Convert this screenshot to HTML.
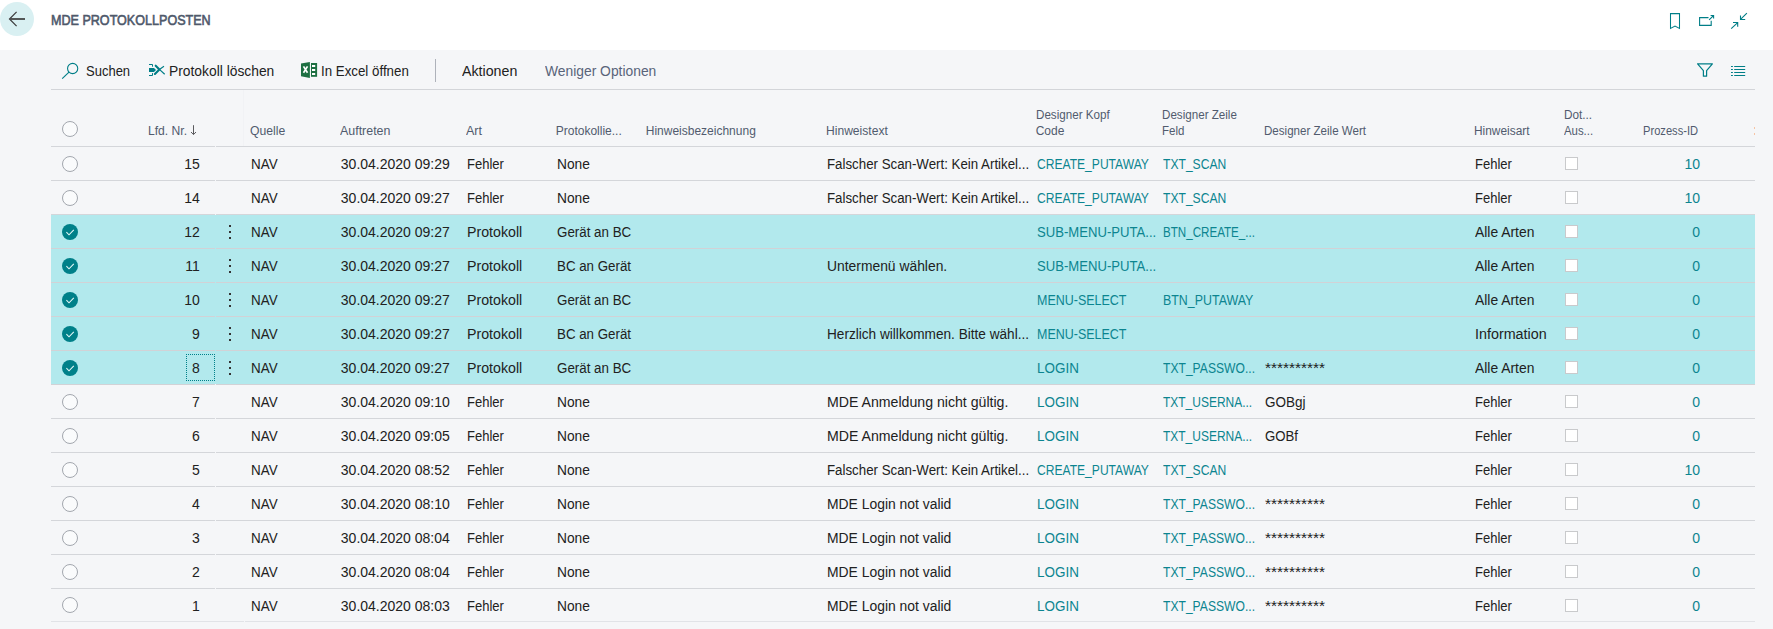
<!DOCTYPE html>
<html lang="de"><head><meta charset="utf-8"><title>MDE Protokollposten</title>
<style>
html,body{margin:0;padding:0}
body{width:1773px;height:629px;overflow:hidden;background:#fff;position:relative;font-family:"Liberation Sans",sans-serif}
.bg{position:absolute;left:0;top:50px;width:1773px;height:579px;background:#f5f6f8}
.t{position:absolute;white-space:pre;transform-origin:0 0}
.sel{position:absolute;left:51px;width:1704px;height:34px;background:#b2e9ed}
.ln{position:absolute;left:51px;width:1704px;height:1px}
.gap{position:absolute;left:215px;width:1px;height:1px}
.rc{position:absolute;left:62px;width:14px;height:14px;border:1px solid #a3a7ae;border-radius:50%;background:#fafbfc}
.ck{position:absolute;left:62px}
.cb{position:absolute;left:1565px;width:11px;height:11px;border:1px solid #c9cacc;background:#fff}
.dots{position:absolute;left:229px;width:2px}
.dots i{display:block;width:2px;height:2px;background:#333;margin-bottom:4px}
.abs{position:absolute}
</style></head><body>
<div class="bg"></div>
<svg class="abs" style="left:0;top:2px" width="34" height="34" viewBox="0 0 34 34"><circle cx="17" cy="17" r="17" fill="#d9f0f2"/><path d="M25 17 H10.5" fill="none" stroke="#3b3b3b" stroke-width="1.7"/><path d="M16.6 9.9 L9.5 17 L16.6 24.1" fill="none" stroke="#3b3b3b" stroke-width="1.2"/></svg>
<svg class="abs" style="left:60px;top:61px" width="20" height="20" viewBox="0 0 20 20"><circle cx="12.65" cy="7.5" r="5.1" fill="none" stroke="#007e87" stroke-width="1.1"/><path d="M9.0 11.2 L2.2 17.7" stroke="#007e87" stroke-width="1.15" fill="none"/></svg>
<svg class="abs" style="left:147px;top:61px" width="20" height="20" viewBox="0 0 20 20"><path d="M2 3.5 H5.5 V5.7 M5.5 12.1 V14.5 H2" stroke="#007e87" stroke-width="1" fill="none"/><path d="M2 7.1 H7 L9 9 L7 10.9 H2 Z" fill="#007e87"/><path d="M8.7 4.7 L12.4 8.4 M7.9 12.9 L12.4 8.4" stroke="#007e87" stroke-width="2.1" stroke-linecap="round" fill="none"/><path d="M12.4 8.4 L17.7 13.2 M12.4 8.4 L17 5.3" stroke="#007e87" stroke-width="1.2" fill="none"/></svg>
<svg class="abs" style="left:300px;top:61px" width="18" height="18" viewBox="0 0 18 18"><path d="M1 2.6 L9.9 0.9 V16.9 L1 15.2 Z" fill="#1d6f42"/><rect x="11" y="2" width="6.1" height="13.8" fill="#1d6f42"/><path d="M12 4.95 h3.2 M12 9.05 h3.2 M12 13.05 h3.2" stroke="#fff" stroke-width="1.9"/><path d="M3.5 5.4 L7.5 11.8 M7.5 5.4 L3.5 11.8" stroke="#fff" stroke-width="1.7"/></svg>
<svg class="abs" style="left:1668px;top:12px" width="14" height="18" viewBox="0 0 14 18"><path d="M2.5 1.6 H11.5 V16.4 L7 14 L2.5 16.4 Z" fill="none" stroke="#007e87" stroke-width="1.05"/></svg>
<svg class="abs" style="left:1697px;top:12px" width="19" height="16" viewBox="0 0 19 16"><path d="M11.5 5.6 H2.6 V13.4 H14.2 V8.8" fill="none" stroke="#007e87" stroke-width="1.1"/><path d="M12.1 7.8 L16.6 3.5 M13.6 3.5 H16.6 V6.5" fill="none" stroke="#007e87" stroke-width="1.1"/></svg>
<svg class="abs" style="left:1730px;top:12px" width="18" height="18" viewBox="0 0 18 18"><path d="M16.9 1.2 L10.5 7.4 M10.5 3.4 V7.5 H15.2 M1.2 16.7 L7.7 10.6 M3 10.5 H7.7 V14.7" fill="none" stroke="#007e87" stroke-width="1.1"/></svg>
<svg class="abs" style="left:1696px;top:62px" width="18" height="16" viewBox="0 0 18 16"><path d="M1.6 1.8 H16.4 L10.6 8.6 V14.2 H7.4 V8.6 Z" fill="none" stroke="#007e87" stroke-width="1.2" stroke-linejoin="round"/></svg>
<svg class="abs" style="left:1730px;top:65px" width="17" height="12" viewBox="0 0 17 12"><path d="M4.2 1.5 H15.2 M4.2 4.5 H15.2 M4.2 7.5 H15.2 M4.2 10.5 H15.2" stroke="#007e87" stroke-width="1"/><path d="M1 1.5 H2.9 M1 4.5 H2.9 M1 7.5 H2.9 M1 10.5 H2.9" stroke="#007e87" stroke-width="1"/></svg>
<svg class="abs" style="left:189px;top:124px" width="9" height="12" viewBox="0 0 9 12"><path d="M4.5 1.2 V10.4 M2 8 L4.5 10.6 L7 8" fill="none" stroke="#5a5a5e" stroke-width="1"/></svg>

<div class="abs" style="left:51px;top:89px;width:1704px;height:1px;background:#d3d5d9"></div>
<div class="abs" style="left:435px;top:59px;width:1px;height:23px;background:#aeb2ba"></div>
<div class="rc" style="top:121px"></div>
<div class="abs" style="left:243px;top:90px;width:1px;height:56px;background:#f1f2f5"></div>
<div class="abs" style="left:1754px;top:127px;width:1px;height:2px;background:#f7c4a4"></div>
<div class="abs" style="left:1754px;top:133px;width:1px;height:2px;background:#f7c4a4"></div>
<div class="rc" style="top:156px"></div>
<div class="cb" style="top:157px"></div>
<div class="rc" style="top:190px"></div>
<div class="cb" style="top:191px"></div>
<div class="sel" style="top:215px"></div>
<svg class="ck" style="top:224px" width="16" height="16" viewBox="0 0 16 16"><circle cx="8" cy="8" r="8" fill="#008089"/><path d="M4.4 8.2 L7 10.8 L11.8 5.8" fill="none" stroke="#e6f8f9" stroke-width="1.05"/></svg>
<div class="dots" style="top:225.25px"><i></i><i></i><i></i></div>
<div class="cb" style="top:225px"></div>
<div class="sel" style="top:249px"></div>
<svg class="ck" style="top:258px" width="16" height="16" viewBox="0 0 16 16"><circle cx="8" cy="8" r="8" fill="#008089"/><path d="M4.4 8.2 L7 10.8 L11.8 5.8" fill="none" stroke="#e6f8f9" stroke-width="1.05"/></svg>
<div class="dots" style="top:259.25px"><i></i><i></i><i></i></div>
<div class="cb" style="top:259px"></div>
<div class="sel" style="top:283px"></div>
<svg class="ck" style="top:292px" width="16" height="16" viewBox="0 0 16 16"><circle cx="8" cy="8" r="8" fill="#008089"/><path d="M4.4 8.2 L7 10.8 L11.8 5.8" fill="none" stroke="#e6f8f9" stroke-width="1.05"/></svg>
<div class="dots" style="top:293.25px"><i></i><i></i><i></i></div>
<div class="cb" style="top:293px"></div>
<div class="sel" style="top:317px"></div>
<svg class="ck" style="top:326px" width="16" height="16" viewBox="0 0 16 16"><circle cx="8" cy="8" r="8" fill="#008089"/><path d="M4.4 8.2 L7 10.8 L11.8 5.8" fill="none" stroke="#e6f8f9" stroke-width="1.05"/></svg>
<div class="dots" style="top:327.25px"><i></i><i></i><i></i></div>
<div class="cb" style="top:327px"></div>
<div class="sel" style="top:351px"></div>
<svg class="ck" style="top:360px" width="16" height="16" viewBox="0 0 16 16"><circle cx="8" cy="8" r="8" fill="#008089"/><path d="M4.4 8.2 L7 10.8 L11.8 5.8" fill="none" stroke="#e6f8f9" stroke-width="1.05"/></svg>
<div class="dots" style="top:361.25px"><i></i><i></i><i></i></div>
<div class="cb" style="top:361px"></div>
<div class="rc" style="top:394px"></div>
<div class="cb" style="top:395px"></div>
<div class="rc" style="top:428px"></div>
<div class="cb" style="top:429px"></div>
<div class="rc" style="top:462px"></div>
<div class="cb" style="top:463px"></div>
<div class="rc" style="top:496px"></div>
<div class="cb" style="top:497px"></div>
<div class="rc" style="top:530px"></div>
<div class="cb" style="top:531px"></div>
<div class="rc" style="top:564px"></div>
<div class="cb" style="top:565px"></div>
<div class="rc" style="top:597px"></div>
<div class="cb" style="top:599px"></div>
<div class="ln" style="top:146px;background:#d4d6da"></div>
<div class="gap" style="top:146px;background:#f5f6f8"></div>
<div class="ln" style="top:180px;background:#d4d6da"></div>
<div class="gap" style="top:180px;background:#f5f6f8"></div>
<div class="ln" style="top:214px;background:#d4d6da"></div>
<div class="gap" style="top:214px;background:#f5f6f8"></div>
<div class="ln" style="top:248px;background:#d2d2d6"></div>
<div class="gap" style="top:248px;background:#b2e9ed"></div>
<div class="ln" style="top:282px;background:#d2d2d6"></div>
<div class="gap" style="top:282px;background:#b2e9ed"></div>
<div class="ln" style="top:316px;background:#d2d2d6"></div>
<div class="gap" style="top:316px;background:#b2e9ed"></div>
<div class="ln" style="top:350px;background:#d2d2d6"></div>
<div class="gap" style="top:350px;background:#b2e9ed"></div>
<div class="ln" style="top:384px;background:#d2d2d6"></div>
<div class="gap" style="top:384px;background:#f5f6f8"></div>
<div class="ln" style="top:418px;background:#d4d6da"></div>
<div class="gap" style="top:418px;background:#f5f6f8"></div>
<div class="ln" style="top:452px;background:#d4d6da"></div>
<div class="gap" style="top:452px;background:#f5f6f8"></div>
<div class="ln" style="top:486px;background:#d4d6da"></div>
<div class="gap" style="top:486px;background:#f5f6f8"></div>
<div class="ln" style="top:520px;background:#d4d6da"></div>
<div class="gap" style="top:520px;background:#f5f6f8"></div>
<div class="ln" style="top:554px;background:#d4d6da"></div>
<div class="gap" style="top:554px;background:#f5f6f8"></div>
<div class="ln" style="top:588px;background:#d4d6da"></div>
<div class="gap" style="top:588px;background:#f5f6f8"></div>
<div class="ln" style="top:621px;background:#e1e3e7"></div>
<div class="gap" style="top:621px;left:244px;background:#f5f6f8"></div>
<div class="abs" style="left:186px;top:354px;width:27px;height:25px;border:1px dotted #008089"></div>
<span class="t" style="left:50.61px;top:3px;font-size:14px;line-height:34px;color:#4f596b;-webkit-text-stroke:0.6px #4f596b;transform:scaleX(0.8976)">MDE PROTOKOLLPOSTEN</span>
<span class="t" style="left:85.79px;top:54px;font-size:14px;line-height:34px;color:#212121;transform:scaleX(0.9285)">Suchen</span>
<span class="t" style="left:168.84px;top:54px;font-size:14px;line-height:34px;color:#212121;transform:scaleX(0.9875)">Protokoll löschen</span>
<span class="t" style="left:321.17px;top:54px;font-size:14px;line-height:34px;color:#212121;transform:scaleX(0.9504)">In Excel öffnen</span>
<span class="t" style="left:461.52px;top:54px;font-size:14px;line-height:34px;color:#212121;transform:scaleX(1.0148)">Aktionen</span>
<span class="t" style="left:544.64px;top:54px;font-size:14px;line-height:34px;color:#59647a;transform:scaleX(0.9884)">Weniger Optionen</span>
<span class="t" style="left:147.63px;top:123px;font-size:12px;line-height:16px;color:#515b6e;transform:scaleX(1.0112)">Lfd. Nr.</span>
<span class="t" style="left:249.53px;top:123px;font-size:12px;line-height:16px;color:#515b6e;transform:scaleX(1.0154)">Quelle</span>
<span class="t" style="left:339.52px;top:123px;font-size:12px;line-height:16px;color:#515b6e;transform:scaleX(1.0353)">Auftreten</span>
<span class="t" style="left:466.31px;top:123px;font-size:12px;line-height:16px;color:#515b6e;transform:scaleX(1.0441)">Art</span>
<span class="t" style="left:555.74px;top:123px;font-size:12px;line-height:16px;color:#515b6e">Protokollie...</span>
<span class="t" style="left:645.74px;top:123px;font-size:12px;line-height:16px;color:#515b6e">Hinweisbezeichnung</span>
<span class="t" style="left:825.84px;top:123px;font-size:12px;line-height:16px;color:#515b6e;transform:scaleX(1.0075)">Hinweistext</span>
<span class="t" style="left:1035.66px;top:107px;font-size:12px;line-height:16px;color:#515b6e;transform:scaleX(0.9694)">Designer Kopf</span>
<span class="t" style="left:1035.64px;top:123px;font-size:12px;line-height:16px;color:#515b6e">Code</span>
<span class="t" style="left:1161.76px;top:107px;font-size:12px;line-height:16px;color:#515b6e;transform:scaleX(0.9683)">Designer Zeile</span>
<span class="t" style="left:1161.77px;top:123px;font-size:12px;line-height:16px;color:#515b6e;transform:scaleX(0.9604)">Feld</span>
<span class="t" style="left:1263.96px;top:123px;font-size:12px;line-height:16px;color:#515b6e;transform:scaleX(0.9640)">Designer Zeile Wert</span>
<span class="t" style="left:1473.75px;top:123px;font-size:12px;line-height:16px;color:#515b6e;transform:scaleX(0.9912)">Hinweisart</span>
<span class="t" style="left:1563.75px;top:107px;font-size:12px;line-height:16px;color:#515b6e;transform:scaleX(0.9802)">Dot...</span>
<span class="t" style="left:1563.77px;top:123px;font-size:12px;line-height:16px;color:#515b6e;transform:scaleX(0.9489)">Aus...</span>
<span class="t" style="left:1642.99px;top:123px;font-size:12px;line-height:16px;color:#515b6e;transform:scaleX(0.9288)">Prozess-ID</span>
<span class="t" style="right:1573.30px;top:147px;font-size:14px;line-height:34px;color:#212121">15</span>
<span class="t" style="left:250.76px;top:147px;font-size:14px;line-height:34px;color:#212121;transform:scaleX(0.9582)">NAV</span>
<span class="t" style="left:340.83px;top:147px;font-size:14px;line-height:34px;color:#212121">30.04.2020 09:29</span>
<span class="t" style="left:466.78px;top:147px;font-size:14px;line-height:34px;color:#212121;transform:scaleX(0.9295)">Fehler</span>
<span class="t" style="left:556.54px;top:147px;font-size:14px;line-height:34px;color:#212121;transform:scaleX(0.9827)">None</span>
<span class="t" style="left:826.87px;top:147px;font-size:14px;line-height:34px;color:#212121;transform:scaleX(0.9491)">Falscher Scan-Wert: Kein Artikel...</span>
<span class="t" style="left:1036.74px;top:147px;font-size:14px;line-height:34px;color:#0c8590;transform:scaleX(0.8630)">CREATE_PUTAWAY</span>
<span class="t" style="left:1162.73px;top:147px;font-size:14px;line-height:34px;color:#0c8590;transform:scaleX(0.8655)">TXT_SCAN</span>
<span class="t" style="left:1474.88px;top:147px;font-size:14px;line-height:34px;color:#212121;transform:scaleX(0.9295)">Fehler</span>
<span class="t" style="right:73.00px;top:147px;font-size:14px;line-height:34px;color:#0c8590">10</span>
<span class="t" style="right:1573.30px;top:181px;font-size:14px;line-height:34px;color:#212121">14</span>
<span class="t" style="left:250.76px;top:181px;font-size:14px;line-height:34px;color:#212121;transform:scaleX(0.9582)">NAV</span>
<span class="t" style="left:340.83px;top:181px;font-size:14px;line-height:34px;color:#212121">30.04.2020 09:27</span>
<span class="t" style="left:466.78px;top:181px;font-size:14px;line-height:34px;color:#212121;transform:scaleX(0.9295)">Fehler</span>
<span class="t" style="left:556.54px;top:181px;font-size:14px;line-height:34px;color:#212121;transform:scaleX(0.9827)">None</span>
<span class="t" style="left:826.87px;top:181px;font-size:14px;line-height:34px;color:#212121;transform:scaleX(0.9491)">Falscher Scan-Wert: Kein Artikel...</span>
<span class="t" style="left:1036.74px;top:181px;font-size:14px;line-height:34px;color:#0c8590;transform:scaleX(0.8630)">CREATE_PUTAWAY</span>
<span class="t" style="left:1162.73px;top:181px;font-size:14px;line-height:34px;color:#0c8590;transform:scaleX(0.8655)">TXT_SCAN</span>
<span class="t" style="left:1474.88px;top:181px;font-size:14px;line-height:34px;color:#212121;transform:scaleX(0.9295)">Fehler</span>
<span class="t" style="right:73.00px;top:181px;font-size:14px;line-height:34px;color:#0c8590">10</span>
<span class="t" style="right:1573.30px;top:215px;font-size:14px;line-height:34px;color:#212121">12</span>
<span class="t" style="left:250.76px;top:215px;font-size:14px;line-height:34px;color:#212121;transform:scaleX(0.9582)">NAV</span>
<span class="t" style="left:340.83px;top:215px;font-size:14px;line-height:34px;color:#212121">30.04.2020 09:27</span>
<span class="t" style="left:466.72px;top:215px;font-size:14px;line-height:34px;color:#212121;transform:scaleX(1.0132)">Protokoll</span>
<span class="t" style="left:556.57px;top:215px;font-size:14px;line-height:34px;color:#212121;transform:scaleX(0.9533)">Gerät an BC</span>
<span class="t" style="left:1036.68px;top:215px;font-size:14px;line-height:34px;color:#0c8590;transform:scaleX(0.9362)">SUB-MENU-PUTA...</span>
<span class="t" style="left:1162.76px;top:215px;font-size:14px;line-height:34px;color:#0c8590;transform:scaleX(0.8287)">BTN_CREATE_...</span>
<span class="t" style="left:1475.44px;top:215px;font-size:14px;line-height:34px;color:#212121;transform:scaleX(0.9909)">Alle Arten</span>
<span class="t" style="right:73.00px;top:215px;font-size:14px;line-height:34px;color:#0c8590">0</span>
<span class="t" style="right:1573.30px;top:249px;font-size:14px;line-height:34px;color:#212121">11</span>
<span class="t" style="left:250.76px;top:249px;font-size:14px;line-height:34px;color:#212121;transform:scaleX(0.9582)">NAV</span>
<span class="t" style="left:340.83px;top:249px;font-size:14px;line-height:34px;color:#212121">30.04.2020 09:27</span>
<span class="t" style="left:466.72px;top:249px;font-size:14px;line-height:34px;color:#212121;transform:scaleX(1.0132)">Protokoll</span>
<span class="t" style="left:556.57px;top:249px;font-size:14px;line-height:34px;color:#212121;transform:scaleX(0.9507)">BC an Gerät</span>
<span class="t" style="left:826.84px;top:249px;font-size:14px;line-height:34px;color:#212121;transform:scaleX(0.9900)">Untermenü wählen.</span>
<span class="t" style="left:1036.68px;top:249px;font-size:14px;line-height:34px;color:#0c8590;transform:scaleX(0.9362)">SUB-MENU-PUTA...</span>
<span class="t" style="left:1475.44px;top:249px;font-size:14px;line-height:34px;color:#212121;transform:scaleX(0.9909)">Alle Arten</span>
<span class="t" style="right:73.00px;top:249px;font-size:14px;line-height:34px;color:#0c8590">0</span>
<span class="t" style="right:1573.30px;top:283px;font-size:14px;line-height:34px;color:#212121">10</span>
<span class="t" style="left:250.76px;top:283px;font-size:14px;line-height:34px;color:#212121;transform:scaleX(0.9582)">NAV</span>
<span class="t" style="left:340.83px;top:283px;font-size:14px;line-height:34px;color:#212121">30.04.2020 09:27</span>
<span class="t" style="left:466.72px;top:283px;font-size:14px;line-height:34px;color:#212121;transform:scaleX(1.0132)">Protokoll</span>
<span class="t" style="left:556.57px;top:283px;font-size:14px;line-height:34px;color:#212121;transform:scaleX(0.9533)">Gerät an BC</span>
<span class="t" style="left:1036.71px;top:283px;font-size:14px;line-height:34px;color:#0c8590;transform:scaleX(0.8917)">MENU-SELECT</span>
<span class="t" style="left:1162.72px;top:283px;font-size:14px;line-height:34px;color:#0c8590;transform:scaleX(0.8870)">BTN_PUTAWAY</span>
<span class="t" style="left:1475.44px;top:283px;font-size:14px;line-height:34px;color:#212121;transform:scaleX(0.9909)">Alle Arten</span>
<span class="t" style="right:73.00px;top:283px;font-size:14px;line-height:34px;color:#0c8590">0</span>
<span class="t" style="right:1573.30px;top:317px;font-size:14px;line-height:34px;color:#212121">9</span>
<span class="t" style="left:250.76px;top:317px;font-size:14px;line-height:34px;color:#212121;transform:scaleX(0.9582)">NAV</span>
<span class="t" style="left:340.83px;top:317px;font-size:14px;line-height:34px;color:#212121">30.04.2020 09:27</span>
<span class="t" style="left:466.72px;top:317px;font-size:14px;line-height:34px;color:#212121;transform:scaleX(1.0132)">Protokoll</span>
<span class="t" style="left:556.57px;top:317px;font-size:14px;line-height:34px;color:#212121;transform:scaleX(0.9507)">BC an Gerät</span>
<span class="t" style="left:826.85px;top:317px;font-size:14px;line-height:34px;color:#212121;transform:scaleX(0.9728)">Herzlich willkommen. Bitte wähl...</span>
<span class="t" style="left:1036.71px;top:317px;font-size:14px;line-height:34px;color:#0c8590;transform:scaleX(0.8917)">MENU-SELECT</span>
<span class="t" style="left:1474.81px;top:317px;font-size:14px;line-height:34px;color:#212121;transform:scaleX(1.0235)">Information</span>
<span class="t" style="right:73.00px;top:317px;font-size:14px;line-height:34px;color:#0c8590">0</span>
<span class="t" style="right:1573.30px;top:351px;font-size:14px;line-height:34px;color:#212121">8</span>
<span class="t" style="left:250.76px;top:351px;font-size:14px;line-height:34px;color:#212121;transform:scaleX(0.9582)">NAV</span>
<span class="t" style="left:340.83px;top:351px;font-size:14px;line-height:34px;color:#212121">30.04.2020 09:27</span>
<span class="t" style="left:466.72px;top:351px;font-size:14px;line-height:34px;color:#212121;transform:scaleX(1.0132)">Protokoll</span>
<span class="t" style="left:556.57px;top:351px;font-size:14px;line-height:34px;color:#212121;transform:scaleX(0.9533)">Gerät an BC</span>
<span class="t" style="left:1036.66px;top:351px;font-size:14px;line-height:34px;color:#0c8590;transform:scaleX(0.9613)">LOGIN</span>
<span class="t" style="left:1162.73px;top:351px;font-size:14px;line-height:34px;color:#0c8590;transform:scaleX(0.8653)">TXT_PASSWO...</span>
<span class="t" style="left:1264.55px;top:351px;font-size:14px;line-height:34px;color:#212121;transform:scaleX(1.1029)">**********</span>
<span class="t" style="left:1475.44px;top:351px;font-size:14px;line-height:34px;color:#212121;transform:scaleX(0.9909)">Alle Arten</span>
<span class="t" style="right:73.00px;top:351px;font-size:14px;line-height:34px;color:#0c8590">0</span>
<span class="t" style="right:1573.30px;top:385px;font-size:14px;line-height:34px;color:#212121">7</span>
<span class="t" style="left:250.76px;top:385px;font-size:14px;line-height:34px;color:#212121;transform:scaleX(0.9582)">NAV</span>
<span class="t" style="left:340.83px;top:385px;font-size:14px;line-height:34px;color:#212121">30.04.2020 09:10</span>
<span class="t" style="left:466.78px;top:385px;font-size:14px;line-height:34px;color:#212121;transform:scaleX(0.9295)">Fehler</span>
<span class="t" style="left:556.54px;top:385px;font-size:14px;line-height:34px;color:#212121;transform:scaleX(0.9827)">None</span>
<span class="t" style="left:826.82px;top:385px;font-size:14px;line-height:34px;color:#212121;transform:scaleX(1.0090)">MDE Anmeldung nicht gültig.</span>
<span class="t" style="left:1036.66px;top:385px;font-size:14px;line-height:34px;color:#0c8590;transform:scaleX(0.9613)">LOGIN</span>
<span class="t" style="left:1162.74px;top:385px;font-size:14px;line-height:34px;color:#0c8590;transform:scaleX(0.8555)">TXT_USERNA...</span>
<span class="t" style="left:1264.66px;top:385px;font-size:14px;line-height:34px;color:#212121;transform:scaleX(0.9637)">GOBgj</span>
<span class="t" style="left:1474.88px;top:385px;font-size:14px;line-height:34px;color:#212121;transform:scaleX(0.9295)">Fehler</span>
<span class="t" style="right:73.00px;top:385px;font-size:14px;line-height:34px;color:#0c8590">0</span>
<span class="t" style="right:1573.30px;top:419px;font-size:14px;line-height:34px;color:#212121">6</span>
<span class="t" style="left:250.76px;top:419px;font-size:14px;line-height:34px;color:#212121;transform:scaleX(0.9582)">NAV</span>
<span class="t" style="left:340.83px;top:419px;font-size:14px;line-height:34px;color:#212121">30.04.2020 09:05</span>
<span class="t" style="left:466.78px;top:419px;font-size:14px;line-height:34px;color:#212121;transform:scaleX(0.9295)">Fehler</span>
<span class="t" style="left:556.54px;top:419px;font-size:14px;line-height:34px;color:#212121;transform:scaleX(0.9827)">None</span>
<span class="t" style="left:826.82px;top:419px;font-size:14px;line-height:34px;color:#212121;transform:scaleX(1.0090)">MDE Anmeldung nicht gültig.</span>
<span class="t" style="left:1036.66px;top:419px;font-size:14px;line-height:34px;color:#0c8590;transform:scaleX(0.9613)">LOGIN</span>
<span class="t" style="left:1162.74px;top:419px;font-size:14px;line-height:34px;color:#0c8590;transform:scaleX(0.8555)">TXT_USERNA...</span>
<span class="t" style="left:1264.67px;top:419px;font-size:14px;line-height:34px;color:#212121;transform:scaleX(0.9422)">GOBf</span>
<span class="t" style="left:1474.88px;top:419px;font-size:14px;line-height:34px;color:#212121;transform:scaleX(0.9295)">Fehler</span>
<span class="t" style="right:73.00px;top:419px;font-size:14px;line-height:34px;color:#0c8590">0</span>
<span class="t" style="right:1573.30px;top:453px;font-size:14px;line-height:34px;color:#212121">5</span>
<span class="t" style="left:250.76px;top:453px;font-size:14px;line-height:34px;color:#212121;transform:scaleX(0.9582)">NAV</span>
<span class="t" style="left:340.83px;top:453px;font-size:14px;line-height:34px;color:#212121">30.04.2020 08:52</span>
<span class="t" style="left:466.78px;top:453px;font-size:14px;line-height:34px;color:#212121;transform:scaleX(0.9295)">Fehler</span>
<span class="t" style="left:556.54px;top:453px;font-size:14px;line-height:34px;color:#212121;transform:scaleX(0.9827)">None</span>
<span class="t" style="left:826.87px;top:453px;font-size:14px;line-height:34px;color:#212121;transform:scaleX(0.9491)">Falscher Scan-Wert: Kein Artikel...</span>
<span class="t" style="left:1036.74px;top:453px;font-size:14px;line-height:34px;color:#0c8590;transform:scaleX(0.8630)">CREATE_PUTAWAY</span>
<span class="t" style="left:1162.73px;top:453px;font-size:14px;line-height:34px;color:#0c8590;transform:scaleX(0.8655)">TXT_SCAN</span>
<span class="t" style="left:1474.88px;top:453px;font-size:14px;line-height:34px;color:#212121;transform:scaleX(0.9295)">Fehler</span>
<span class="t" style="right:73.00px;top:453px;font-size:14px;line-height:34px;color:#0c8590">10</span>
<span class="t" style="right:1573.30px;top:487px;font-size:14px;line-height:34px;color:#212121">4</span>
<span class="t" style="left:250.76px;top:487px;font-size:14px;line-height:34px;color:#212121;transform:scaleX(0.9582)">NAV</span>
<span class="t" style="left:340.83px;top:487px;font-size:14px;line-height:34px;color:#212121">30.04.2020 08:10</span>
<span class="t" style="left:466.78px;top:487px;font-size:14px;line-height:34px;color:#212121;transform:scaleX(0.9295)">Fehler</span>
<span class="t" style="left:556.54px;top:487px;font-size:14px;line-height:34px;color:#212121;transform:scaleX(0.9827)">None</span>
<span class="t" style="left:826.84px;top:487px;font-size:14px;line-height:34px;color:#212121;transform:scaleX(0.9920)">MDE Login not valid</span>
<span class="t" style="left:1036.66px;top:487px;font-size:14px;line-height:34px;color:#0c8590;transform:scaleX(0.9613)">LOGIN</span>
<span class="t" style="left:1162.73px;top:487px;font-size:14px;line-height:34px;color:#0c8590;transform:scaleX(0.8653)">TXT_PASSWO...</span>
<span class="t" style="left:1264.55px;top:487px;font-size:14px;line-height:34px;color:#212121;transform:scaleX(1.1029)">**********</span>
<span class="t" style="left:1474.88px;top:487px;font-size:14px;line-height:34px;color:#212121;transform:scaleX(0.9295)">Fehler</span>
<span class="t" style="right:73.00px;top:487px;font-size:14px;line-height:34px;color:#0c8590">0</span>
<span class="t" style="right:1573.30px;top:521px;font-size:14px;line-height:34px;color:#212121">3</span>
<span class="t" style="left:250.76px;top:521px;font-size:14px;line-height:34px;color:#212121;transform:scaleX(0.9582)">NAV</span>
<span class="t" style="left:340.83px;top:521px;font-size:14px;line-height:34px;color:#212121">30.04.2020 08:04</span>
<span class="t" style="left:466.78px;top:521px;font-size:14px;line-height:34px;color:#212121;transform:scaleX(0.9295)">Fehler</span>
<span class="t" style="left:556.54px;top:521px;font-size:14px;line-height:34px;color:#212121;transform:scaleX(0.9827)">None</span>
<span class="t" style="left:826.84px;top:521px;font-size:14px;line-height:34px;color:#212121;transform:scaleX(0.9920)">MDE Login not valid</span>
<span class="t" style="left:1036.66px;top:521px;font-size:14px;line-height:34px;color:#0c8590;transform:scaleX(0.9613)">LOGIN</span>
<span class="t" style="left:1162.73px;top:521px;font-size:14px;line-height:34px;color:#0c8590;transform:scaleX(0.8653)">TXT_PASSWO...</span>
<span class="t" style="left:1264.55px;top:521px;font-size:14px;line-height:34px;color:#212121;transform:scaleX(1.1029)">**********</span>
<span class="t" style="left:1474.88px;top:521px;font-size:14px;line-height:34px;color:#212121;transform:scaleX(0.9295)">Fehler</span>
<span class="t" style="right:73.00px;top:521px;font-size:14px;line-height:34px;color:#0c8590">0</span>
<span class="t" style="right:1573.30px;top:555px;font-size:14px;line-height:34px;color:#212121">2</span>
<span class="t" style="left:250.76px;top:555px;font-size:14px;line-height:34px;color:#212121;transform:scaleX(0.9582)">NAV</span>
<span class="t" style="left:340.83px;top:555px;font-size:14px;line-height:34px;color:#212121">30.04.2020 08:04</span>
<span class="t" style="left:466.78px;top:555px;font-size:14px;line-height:34px;color:#212121;transform:scaleX(0.9295)">Fehler</span>
<span class="t" style="left:556.54px;top:555px;font-size:14px;line-height:34px;color:#212121;transform:scaleX(0.9827)">None</span>
<span class="t" style="left:826.84px;top:555px;font-size:14px;line-height:34px;color:#212121;transform:scaleX(0.9920)">MDE Login not valid</span>
<span class="t" style="left:1036.66px;top:555px;font-size:14px;line-height:34px;color:#0c8590;transform:scaleX(0.9613)">LOGIN</span>
<span class="t" style="left:1162.73px;top:555px;font-size:14px;line-height:34px;color:#0c8590;transform:scaleX(0.8653)">TXT_PASSWO...</span>
<span class="t" style="left:1264.55px;top:555px;font-size:14px;line-height:34px;color:#212121;transform:scaleX(1.1029)">**********</span>
<span class="t" style="left:1474.88px;top:555px;font-size:14px;line-height:34px;color:#212121;transform:scaleX(0.9295)">Fehler</span>
<span class="t" style="right:73.00px;top:555px;font-size:14px;line-height:34px;color:#0c8590">0</span>
<span class="t" style="right:1573.30px;top:589px;font-size:14px;line-height:34px;color:#212121">1</span>
<span class="t" style="left:250.76px;top:589px;font-size:14px;line-height:34px;color:#212121;transform:scaleX(0.9582)">NAV</span>
<span class="t" style="left:340.83px;top:589px;font-size:14px;line-height:34px;color:#212121">30.04.2020 08:03</span>
<span class="t" style="left:466.78px;top:589px;font-size:14px;line-height:34px;color:#212121;transform:scaleX(0.9295)">Fehler</span>
<span class="t" style="left:556.54px;top:589px;font-size:14px;line-height:34px;color:#212121;transform:scaleX(0.9827)">None</span>
<span class="t" style="left:826.84px;top:589px;font-size:14px;line-height:34px;color:#212121;transform:scaleX(0.9920)">MDE Login not valid</span>
<span class="t" style="left:1036.66px;top:589px;font-size:14px;line-height:34px;color:#0c8590;transform:scaleX(0.9613)">LOGIN</span>
<span class="t" style="left:1162.73px;top:589px;font-size:14px;line-height:34px;color:#0c8590;transform:scaleX(0.8653)">TXT_PASSWO...</span>
<span class="t" style="left:1264.55px;top:589px;font-size:14px;line-height:34px;color:#212121;transform:scaleX(1.1029)">**********</span>
<span class="t" style="left:1474.88px;top:589px;font-size:14px;line-height:34px;color:#212121;transform:scaleX(0.9295)">Fehler</span>
<span class="t" style="right:73.00px;top:589px;font-size:14px;line-height:34px;color:#0c8590">0</span>
</body></html>
